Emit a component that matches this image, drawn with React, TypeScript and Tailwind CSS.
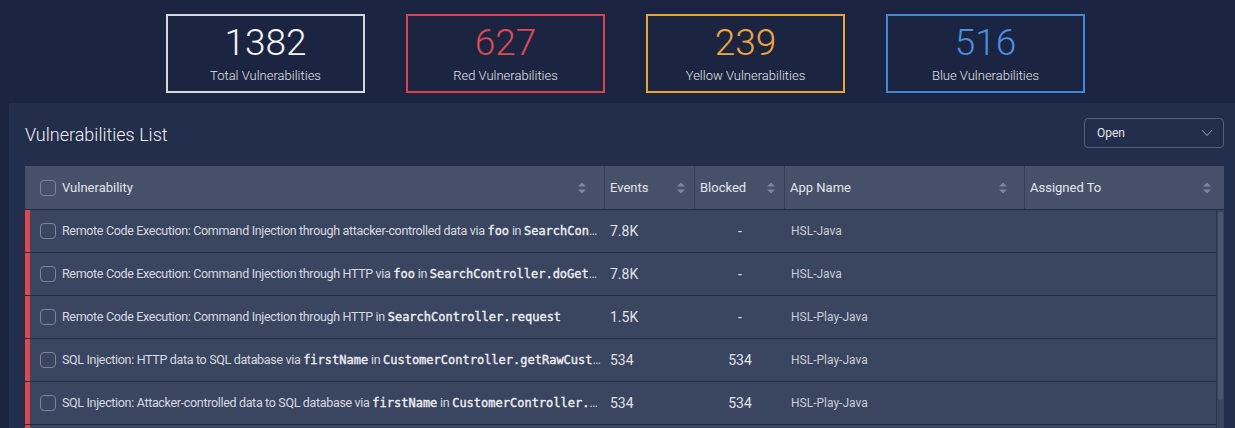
import React from "react";

const CARDS = [
  { value: "1382", label: "Total Vulnerabilities", border: "border-[#d3d7de]", text: "text-[#f3f4f7]" },
  { value: "627", label: "Red Vulnerabilities", border: "border-[#d9434a]", text: "text-[#de4a50]" },
  { value: "239", label: "Yellow Vulnerabilities", border: "border-[#eda332]", text: "text-[#efa53a]" },
  { value: "516", label: "Blue Vulnerabilities", border: "border-[#3f88dc]", text: "text-[#4a8fe0]" },
];

type Part = { t: string; code?: boolean };

const ROWS: { parts: Part[]; events: string; blocked: string; app: string }[] = [
  {
    parts: [
      { t: "Remote Code Execution: Command Injection through attacker-controlled data via " },
      { t: "foo", code: true },
      { t: " in " },
      { t: "SearchController.doGetSearch", code: true },
    ],
    events: "7.8K",
    blocked: "-",
    app: "HSL-Java",
  },
  {
    parts: [
      { t: "Remote Code Execution: Command Injection through HTTP via " },
      { t: "foo", code: true },
      { t: " in " },
      { t: "SearchController.doGetSearch", code: true },
    ],
    events: "7.8K",
    blocked: "-",
    app: "HSL-Java",
  },
  {
    parts: [
      { t: "Remote Code Execution: Command Injection through HTTP in " },
      { t: "SearchController.request", code: true },
    ],
    events: "1.5K",
    blocked: "-",
    app: "HSL-Play-Java",
  },
  {
    parts: [
      { t: "SQL Injection: HTTP data to SQL database via " },
      { t: "firstName", code: true },
      { t: " in " },
      { t: "CustomerController.getRawCustomers", code: true },
    ],
    events: "534",
    blocked: "534",
    app: "HSL-Play-Java",
  },
  {
    parts: [
      { t: "SQL Injection: Attacker-controlled data to SQL database via " },
      { t: "firstName", code: true },
      { t: " in " },
      { t: "CustomerController.getCustomer", code: true },
    ],
    events: "534",
    blocked: "534",
    app: "HSL-Play-Java",
  },
  {
    parts: [{ t: "SQL Injection: HTTP data to SQL database via " }, { t: "lastName", code: true }],
    events: "120",
    blocked: "-",
    app: "HSL-Play-Java",
  },
];

// flechitas de orden en la cabecera
function SortIcon() {
  return (
    <svg width="10" height="14" viewBox="0 0 10 14" className="shrink-0">
      <path d="M5 1.5 L9 5.5 L1 5.5 Z" fill="#7c88a1" />
      <path d="M5 12.5 L9 8.5 L1 8.5 Z" fill="#7c88a1" />
    </svg>
  );
}

function Checkbox() {
  return <span className="block w-4 h-4 shrink-0 rounded-[4px] border border-[#7a859c]" />;
}

export default function App() {
  const sans = { fontFamily: "Roboto, 'Liberation Sans', sans-serif" };
  const mono = { fontFamily: "'DejaVu Sans Mono', 'Liberation Mono', monospace" };

  return (
    <div className="h-screen w-full overflow-hidden bg-[#1b2541] text-[#d4d8e0]" style={sans}>
      {/* TARJETAS DE RESUMEN */}
      <div className="h-[103px] pt-[14px] pl-[166px] flex gap-[41px]">
        {CARDS.map((c) => (
          <div
            key={c.label}
            className={`w-[199px] h-[79px] border-2 ${c.border} flex flex-col items-center`}
          >
            <span className={`mt-[5px] text-[37px] leading-[44px] font-light ${c.text}`}>{c.value}</span>
            <span className="mt-[3px] text-[13px] leading-[16px] font-light text-[#e0e3e8]">{c.label}</span>
          </div>
        ))}
      </div>

      {/* PANEL LISTA */}
      <div className="ml-[9px] w-[1231px] bg-[#222e4b] pt-[14px] pl-[16px] pr-[16px] h-[400px]">
        <div className="flex items-center justify-between h-[31px] mb-[18px]">
          <h2 className="text-[18px] font-light text-[#eef0f4] mt-[3px]">Vulnerabilities List</h2>
          <div className="w-[140px] h-[30px] rounded-[4px] border border-[#55617a] flex items-center justify-between pl-[12px] pr-[10px]">
            <span className="text-[12px] text-[#e4e7ec]">Open</span>
            <svg width="12" height="8" viewBox="0 0 12 8">
              <path d="M1 1 L6 6.5 L11 1" fill="none" stroke="#7c88a0" strokeWidth="1.1" />
            </svg>
          </div>
        </div>

        {/* CABECERA */}
        <div className="grid grid-cols-[580px_90px_90px_240px_199px] h-[44px] bg-[#465169] border-b border-[#222c45] text-[13px] text-[#e2e5ea]">
          <div className="flex items-center pl-[15px] pr-[17px] border-r border-[#333e58]">
            <Checkbox />
            <span className="ml-[6px] flex-1 mt-[1px]">Vulnerability</span>
            <SortIcon />
          </div>
          <div className="flex items-center pl-[5px] pr-[8px] border-r border-[#333e58]">
            <span className="flex-1 mt-[1px]">Events</span>
            <SortIcon />
          </div>
          <div className="flex items-center pl-[5px] pr-[8px] border-r border-[#333e58]">
            <span className="flex-1 mt-[1px]">Blocked</span>
            <SortIcon />
          </div>
          <div className="flex items-center pl-[5px] pr-[16px] border-r border-[#333e58]">
            <span className="flex-1 mt-[1px]">App Name</span>
            <SortIcon />
          </div>
          <div className="flex items-center pl-[5px] pr-[12px]">
            <span className="flex-1 mt-[1px]">Assigned To</span>
            <SortIcon />
          </div>
        </div>

        {/* FILAS */}
        <div className="flex">
          <div className="w-[1191px]">
            {ROWS.map((r, i) => (
              <div
                key={i}
                className="grid grid-cols-[580px_90px_90px_240px_191px] h-[43px] bg-[#3a4560] border-b border-[#222c45]"
              >
                <div className="flex items-center border-l-[5px] border-[#e0474c] pl-[10px] pr-[4px] min-w-0">
                  <Checkbox />
                  <div className="ml-[6px] min-w-0 flex-1 truncate text-[12.5px] tracking-[-0.33px] text-[#d6dae2]">
                    {r.parts.map((p, j) =>
                      p.code ? (
                        <code
                          key={j}
                          className="text-[12px] tracking-normal text-[#eef0f4] [-webkit-text-stroke:0.35px_#eef0f4]"
                          style={mono}
                        >
                          {p.t}
                        </code>
                      ) : (
                        <React.Fragment key={j}>{p.t}</React.Fragment>
                      )
                    )}
                  </div>
                </div>
                <div className="flex items-center pl-[5px] text-[14px] text-[#e0e3e9]">{r.events}</div>
                <div className="flex items-center justify-center text-[14px] text-[#e0e3e9]">{r.blocked}</div>
                <div className="flex items-center pl-[6px] text-[12px] text-[#c9ced8]">{r.app}</div>
                <div />
              </div>
            ))}
          </div>
          {/* barra de scroll */}
          <div className="w-[8px] bg-[#3a4560] border-l border-[#2a3550] pt-[2px]">
            <div className="w-[5px] h-[188px] rounded-full bg-[#4a556f] ml-[1px]" />
          </div>
        </div>
      </div>
    </div>
  );
}
